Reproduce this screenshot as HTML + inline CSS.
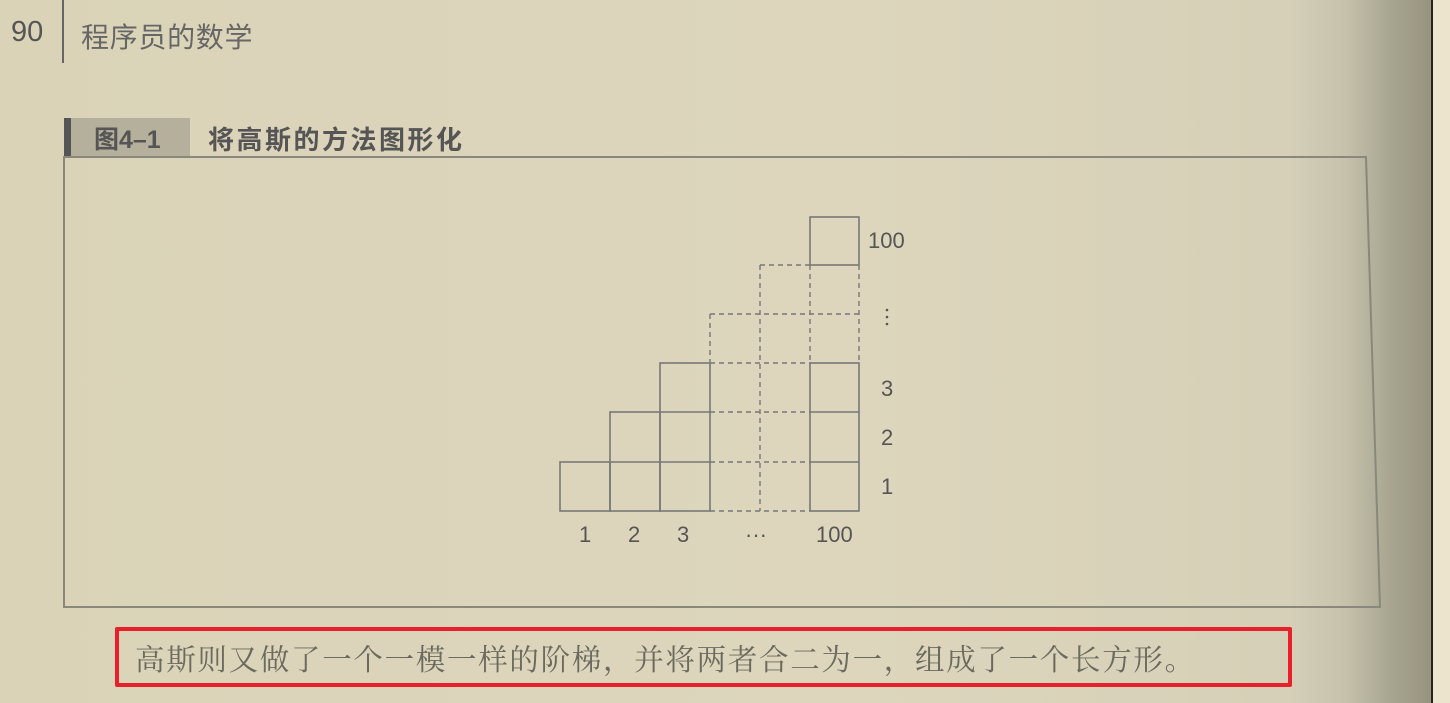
<!DOCTYPE html>
<html><head><meta charset="utf-8"><style>
html,body{margin:0;padding:0;width:1450px;height:703px;overflow:hidden;background:#dcd5bb;font-family:"Liberation Sans","Noto Sans CJK SC",sans-serif;}
.bg{position:absolute;left:0;top:0;width:1431px;height:703px;background:linear-gradient(to right,#dad3b8 0%,#ddd6bd 60%,#d6d0b8 90%,#c6c2ac 94%,#a9a692 97%,#97937f 100%);}
.side{position:absolute;left:1431px;top:0;width:19px;height:703px;background:#ece4cc;border-left:2px solid #222;}
.t{position:absolute;white-space:nowrap;}
</style></head><body>
<div class="bg"></div>
<div class="side"></div>
<div class="t" style="left:11px;top:16px;font-size:29px;color:#555;">90</div>
<div style="position:absolute;left:62px;top:0;width:2px;height:63px;background:#666;"></div>
<div class="t" style="left:81px;top:16px;font-size:28px;letter-spacing:0.7px;color:#666;">程序员的数学</div>
<div style="position:absolute;left:64px;top:118px;width:126px;height:38px;background:#b5b09c;border-left:7px solid #555;box-sizing:border-box;"></div>
<div class="t" style="left:94px;top:120px;font-size:25px;font-weight:bold;color:#555;">图4–1</div>
<div class="t" style="left:208px;top:120px;font-size:26px;letter-spacing:2.5px;font-weight:bold;color:#555;">将高斯的方法图形化</div>
<svg width="1450" height="703" style="position:absolute;left:0;top:0">
<polygon points="64,157 1366,157 1380,607 64,607" fill="none" stroke="#8a887c" stroke-width="2"/>
<g stroke="#777" stroke-width="1.6" fill="none">
<rect x="560" y="462" width="50" height="49"/>
<rect x="610" y="412" width="50" height="99"/><line x1="610" y1="462" x2="660" y2="462"/>
<rect x="660" y="363" width="50" height="148"/><line x1="660" y1="412" x2="710" y2="412"/><line x1="660" y1="462" x2="710" y2="462"/>
<rect x="810" y="363" width="49" height="148"/><line x1="810" y1="412" x2="859" y2="412"/><line x1="810" y1="462" x2="859" y2="462"/>
<rect x="810" y="217" width="49" height="48"/>
</g>
<g stroke="#777" stroke-width="1.4" fill="none" stroke-dasharray="5,4">
<line x1="710" y1="511" x2="810" y2="511"/>
<line x1="710" y1="462" x2="810" y2="462"/>
<line x1="710" y1="412" x2="810" y2="412"/>
<line x1="710" y1="363" x2="810" y2="363"/>
<line x1="710" y1="314" x2="859" y2="314"/>
<line x1="760" y1="265" x2="810" y2="265"/>
<line x1="710" y1="314" x2="710" y2="363"/>
<line x1="760" y1="265" x2="760" y2="511"/>
<line x1="810" y1="265" x2="810" y2="363"/>
<line x1="859" y1="265" x2="859" y2="363"/>
</g>
<g fill="#555" font-size="22" font-family="Liberation Sans,sans-serif">
<text x="868" y="248">100</text>
<text x="881" y="396">3</text>
<text x="881" y="445">2</text>
<text x="881" y="494">1</text>
<text x="579" y="542">1</text>
<text x="628" y="542">2</text>
<text x="677" y="542">3</text>
<text x="745" y="542">···</text>
<text x="816" y="542">100</text>
<circle cx="887" cy="310" r="1.3"/><circle cx="887" cy="317" r="1.3"/><circle cx="887" cy="324" r="1.3"/>
</g>
</svg>
<div style="position:absolute;left:115px;top:627px;width:1177px;height:60px;border:4px solid #e8202a;box-sizing:border-box;border-radius:2px;"></div>
<div class="t" style="left:135px;top:637px;font-size:29.5px;color:#6a6a5e;font-family:'Liberation Serif','Noto Serif CJK SC',serif;letter-spacing:1.7px;">高斯则又做了一个一模一样的阶梯，并将两者合二为一，组成了一个长方形。</div>
</body></html>
